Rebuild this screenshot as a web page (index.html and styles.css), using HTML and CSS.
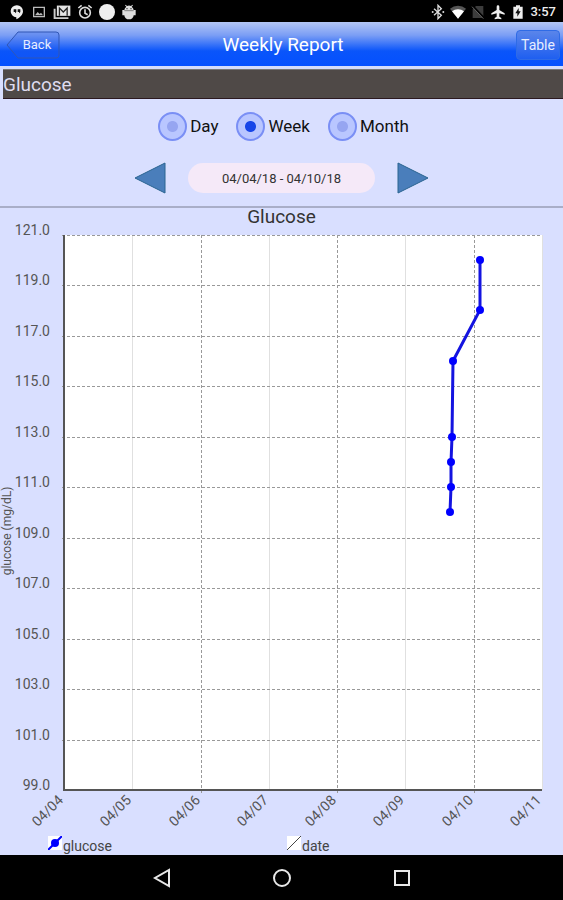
FILE: index.html
```html
<!DOCTYPE html>
<html lang="en">
<head>
    <meta charset="utf-8">
    <meta name="viewport" content="width=device-width, initial-scale=1">
    <title>Weekly Report</title>
    <link rel="stylesheet" href="styles.css">
</head>
<body>
    <div class="status-bar">
        <div class="status-group notifications">
            <svg viewBox="0 0 24 24"><path fill="#eee" d="M12 2a9 9 0 0 0-1 18v3c5-2 10-7 10-12a9 9 0 0 0-9-9z"/><path fill="#111" d="M7 8h4v4l-2 2v-2H7zM13 8h4v4l-2 2v-2h-2z"/></svg>
            <svg viewBox="0 0 24 24"><path fill="#bbb" fill-rule="evenodd" d="M3 4h18v16H3zM5 6v12h14V6z"/><path fill="#bbb" d="M6 17l4-5 3 3 2-2 3 4z"/></svg>
            <svg class="icon-wide" viewBox="0 0 28 24"><path fill="#ccc" d="M1 7h3v13h20v3H1z"/><path fill="#e4e4e4" d="M6 2h21v16H6z"/><path fill="none" stroke="#222" stroke-width="2" d="M10 18V6l6 6 6-6v12"/></svg>
            <svg viewBox="0 0 24 24" fill="none" stroke="#ddd" stroke-width="2.4"><circle cx="12" cy="13" r="8"/><path d="M12 8v6l4 2M2 6l5-4M22 6l-5-4"/></svg>
            <svg viewBox="0 0 24 24"><circle cx="12" cy="12" r="12" fill="#eee"/></svg>
            <svg viewBox="0 0 24 24"><path fill="#ddd" d="M5 9a7 7 0 0 1 3-5L6 2l1-1 2 2a8 8 0 0 1 6 0l2-2 1 1-2 2a7 7 0 0 1 3 5h3v8h-3a7 6 0 0 1-14 0H2V9z"/><path stroke="#555" stroke-width="1" d="M5 10h14"/><circle cx="9" cy="7" r="1" fill="#222"/><circle cx="15" cy="7" r="1" fill="#222"/></svg>
        </div>
        <div class="status-group system">
            <svg viewBox="0 0 24 24"><path fill="none" stroke="#ddd" stroke-width="2" d="M6 7l11 10-5 5V2l5 5L6 17"/><circle cx="4" cy="12" r="1.5" fill="#ddd"/><circle cx="20" cy="12" r="1.5" fill="#ddd"/></svg>
            <svg viewBox="0 0 24 24"><path fill="#555" d="M12 22L0 7a19 19 0 0 1 24 0z"/><path fill="#fff" d="M12 22L3 11a14 14 0 0 1 18 0z"/></svg>
            <svg viewBox="0 0 24 24"><path fill="#3c3c3c" d="M9 3h11v18H4V8z"/><path stroke="#000" stroke-width="3" d="M4 3l17 18"/><path stroke="#666" stroke-width="1.5" d="M3 4l17 18"/></svg>
            <svg viewBox="0 0 24 24"><path fill="#eee" d="M22 16v-2l-8-5V4a2 2 0 0 0-4 0v5l-8 5v2l8-2v5l-3 2v2l5-1 5 1v-2l-3-2v-5z"/></svg>
            <svg viewBox="0 0 24 24"><path fill="#eee" d="M9 2h6v2h4v18H5V4h4z"/><path fill="#111" d="M13 6l-5 8h3v5l5-8h-3z"/></svg>
            <span class="clock">3:57</span>
        </div>
    </div>

    <header class="title-bar">
        <button class="back-btn" type="button">
            <svg class="back-shape" viewBox="0 0 54 28"><path d="M12 1h38q3 0 3 3v20q0 3-3 3H12L1 14z"/></svg>
            <span>Back</span>
        </button>
        <h1>Weekly Report</h1>
        <button class="table-btn" type="button">Table</button>
    </header>

    <main>
        <h2 class="section-name">Glucose</h2>

        <form class="controls">
            <div class="period">
                <label><input type="radio" name="period" value="day">Day</label>
                <label><input type="radio" name="period" value="week" checked>Week</label>
                <label><input type="radio" name="period" value="month">Month</label>
            </div>
            <div class="range">
                <button class="arrow" type="button" aria-label="Previous week">
                    <svg viewBox="0 0 32 32"><path d="M1 16L31 1v30z"/></svg>
                </button>
                <button class="range-value" type="button">04/04/18 - 04/10/18</button>
                <button class="arrow" type="button" aria-label="Next week">
                    <svg viewBox="0 0 32 32"><path d="M31 16L1 1v30z"/></svg>
                </button>
            </div>
        </form>

        <section class="chart">
            <h3>Glucose</h3>
            <svg class="plot" viewBox="0 0 563 610" role="img" aria-label="Glucose by date">
                <rect class="plot-area" x="64" y="9" width="478" height="555"/>

                <path class="grid-light" d="M132 9V564M269 9V564M405 9V564M542 9V564"/>
                <path class="grid" d="M201 9V568M337 9V568M474 9V568"/>
                <path class="grid" d="M62 9H542M62 59H542M62 110H542M62 160H542M62 211H542M62 261H542M62 312H542M62 362H542M62 413H542M62 463H542M62 514H542"/>
                <path class="axis" d="M64 9V564H542"/>

                <g class="y-labels">
                    <text x="50" y="9">121.0</text>
                    <text x="50" y="59">119.0</text>
                    <text x="50" y="110">117.0</text>
                    <text x="50" y="160">115.0</text>
                    <text x="50" y="211">113.0</text>
                    <text x="50" y="261">111.0</text>
                    <text x="50" y="312">109.0</text>
                    <text x="50" y="362">107.0</text>
                    <text x="50" y="413">105.0</text>
                    <text x="50" y="463">103.0</text>
                    <text x="50" y="514">101.0</text>
                    <text x="50" y="564">99.0</text>
                </g>
                <text class="y-title" transform="translate(11 305) rotate(-90)">glucose (mg/dL)</text>

                <g class="x-labels">
                    <text transform="translate(64 575) rotate(-45)">04/04</text>
                    <text transform="translate(132 575) rotate(-45)">04/05</text>
                    <text transform="translate(201 575) rotate(-45)">04/06</text>
                    <text transform="translate(269 575) rotate(-45)">04/07</text>
                    <text transform="translate(337 575) rotate(-45)">04/08</text>
                    <text transform="translate(405 575) rotate(-45)">04/09</text>
                    <text transform="translate(474 575) rotate(-45)">04/10</text>
                    <text transform="translate(542 575) rotate(-45)">04/11</text>
                </g>

                <polyline class="series" points="450,286 451,261 451,236 452,211 453,135 480,84 480,34"/>
                <g class="points">
                    <circle cx="450" cy="286" r="4"/>
                    <circle cx="451" cy="261" r="4"/>
                    <circle cx="451" cy="236" r="4"/>
                    <circle cx="452" cy="211" r="4"/>
                    <circle cx="453" cy="135" r="4"/>
                    <circle cx="480" cy="84" r="4"/>
                    <circle cx="480" cy="34" r="4"/>
                </g>
            </svg>
            <div class="legend">
                <span class="legend-item">
                    <svg viewBox="0 0 14 14"><path stroke="#00f" stroke-width="2" d="M0 14L14 0"/><circle cx="7" cy="7" r="4" fill="#00f"/></svg>glucose
                </span>
                <span class="legend-item">
                    <svg viewBox="0 0 14 14"><path stroke="#444" d="M0 14L14 0"/></svg>date
                </span>
            </div>
        </section>
    </main>

    <nav class="nav-bar">
        <button type="button" aria-label="Back"><svg viewBox="0 0 20 20"><path d="M17 2v16L3 10z"/></svg></button>
        <button type="button" aria-label="Home"><svg viewBox="0 0 20 20"><circle cx="10" cy="10" r="8"/></svg></button>
        <button type="button" aria-label="Recent apps"><svg viewBox="0 0 20 20"><path d="M3 3h14v14H3z"/></svg></button>
    </nav>
</body>
</html>
```
FILE: styles.css
```css
* {
    box-sizing: border-box;
}

body {
    margin: 0;
    min-height: 100vh;
    display: flex;
    flex-direction: column;
    background: #d9dfff;
    color: #222;
    font-family: Roboto, sans-serif;
}

h1, h2, h3 {
    margin: 0;
    font-weight: normal;
}

button {
    padding: 0;
    border: none;
    background: none;
    font-family: inherit;
    cursor: pointer;
}

svg {
    display: block;
}

/* Status bar */
.status-bar {
    display: flex;
    justify-content: space-between;
    align-items: center;
    height: 22px;
    padding: 2px 7px 0 9px;
    background: #000;
}

.status-group {
    display: flex;
    align-items: center;
}

.status-group svg {
    width: 16px;
    height: 16px;
}

.status-group .icon-wide {
    width: 18px;
}

.notifications {
    gap: 6px;
}

.system {
    gap: 4px;
}

.clock {
    color: #eee;
    font-size: 13px;
    font-weight: 500;
    line-height: 16px;
}

/* Title bar */
.title-bar {
    display: grid;
    grid-template-columns: 1fr auto 1fr;
    align-items: center;
    height: 47px;
    padding: 1px 3px 0 6px;
    border-bottom: 3px solid #d3dcfb;
    background: linear-gradient(#b3c6f5, #7b9ef5 30%, #0a55fa 66%, #0450ff);
}

.title-bar h1 {
    color: #fff;
    font-size: 19px;
    line-height: 24px;
}

.back-btn {
    display: grid;
    align-items: center;
    width: 54px;
    height: 28px;
    color: #e8eeff;
    font-size: 13px;
}

.back-btn > * {
    grid-area: 1 / 1;
}

.back-btn span {
    padding-left: 8px;
}

.back-shape path {
    fill: rgba(40, 90, 230, 0.25);
    stroke: #3157b5;
}

.table-btn {
    justify-self: end;
    width: 44px;
    height: 30px;
    border: 1px solid #2f6be6;
    border-radius: 4px;
    background: linear-gradient(#5a85ea, #1f5ff0);
    color: #e8eeff;
    font-size: 14px;
}

/* Controls */
.section-name {
    height: 30px;
    margin-left: 3px;
    border-top: 1px solid #777;
    border-bottom: 1px solid #2c1a20;
    background: #4f4947;
    color: #dfdcf0;
    font-size: 19px;
    line-height: 30px;
}

.controls {
    padding: 12px 0;
    border-bottom: 2px solid #a9aec8;
}

.period {
    display: flex;
    justify-content: center;
    gap: 18px;
    padding-left: 4px;
}

.period label {
    display: flex;
    align-items: center;
    gap: 3px;
    color: #111;
    font-size: 17px;
    line-height: 30px;
}

.period input {
    appearance: none;
    width: 29px;
    height: 29px;
    margin: 0;
    border: 2px solid #7a8ff5;
    border-radius: 50%;
    background: radial-gradient(circle, #96a5f1 5px, #b9c6ff 6px);
}

.period input:checked {
    background: radial-gradient(circle, #1745e8 5px, #b9c6ff 6px);
}

.range {
    display: flex;
    justify-content: center;
    align-items: center;
    gap: 22px;
    margin-top: 21px;
}

.arrow svg {
    width: 32px;
    height: 32px;
    fill: #4a7ebb;
    stroke: #2a6490;
}

.range-value {
    width: 187px;
    height: 30px;
    border-radius: 15px;
    background: #f5e9f8;
    color: #333;
    font-size: 13px;
}

/* Chart */
.chart h3 {
    color: #333;
    font-size: 19px;
    line-height: 18px;
    text-align: center;
}

.plot {
    width: 100%;
    height: auto;
    overflow: visible; /* top y label reaches above the plot */
}

.plot-area {
    fill: #fff;
}

.grid,
.grid-light,
.axis {
    fill: none;
    shape-rendering: crispEdges;
}

.grid {
    stroke: #999;
    stroke-dasharray: 3 2;
}

.grid-light {
    stroke: #e0e0e0;
}

.axis {
    stroke: #555;
    stroke-width: 2;
}

.y-labels,
.x-labels {
    fill: #555;
    font-size: 14px;
    text-anchor: end;
}

.y-title {
    fill: #555;
    font-size: 12px;
    text-anchor: middle;
}

.series {
    fill: none;
    stroke: #1414e0;
    stroke-width: 3;
}

.points {
    fill: #00f;
}

.legend {
    display: grid;
    grid-template-columns: 239px 1fr;
    padding-left: 48px;
    height: 19px;
}

.legend-item {
    display: flex;
    align-items: flex-start;
    gap: 1px;
    color: #444;
    font-size: 14px;
    line-height: 20px;
}

.legend-item svg {
    width: 14px;
    height: 14px;
    background: #fff;
}

/* Navigation bar */
.nav-bar {
    flex: 1;
    display: flex;
    justify-content: center;
    align-items: center;
    gap: 100px;
    min-height: 45px;
    background: #000;
}

.nav-bar svg {
    width: 20px;
    height: 20px;
    fill: none;
    stroke: #e8e8e8;
    stroke-width: 2;
}
```
